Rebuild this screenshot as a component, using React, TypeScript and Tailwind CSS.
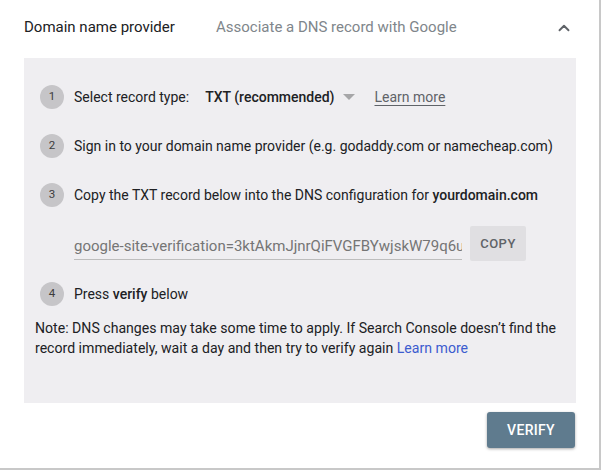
import { ChevronUp } from 'lucide-react'

// ─── Step badge ──────────────────────────────────────────────

function Step({ n, children }: { n: number; children: React.ReactNode }) {
    return (
        <div className="flex items-center h-[26px]">
            <div className="w-[24px] h-[24px] rounded-full bg-[#c6c5c8] text-[#3c3c3c] text-[11.5px] flex items-center justify-center ml-[16px] mr-[10px]">
                {n}
            </div>
            <div className="text-[14px] text-[#202124]">{children}</div>
        </div>
    )
}

export default function App() {
    return (
        <div className="w-[601px] h-[470px] bg-white border-r-[2px] border-b-[2px] border-[#c8c8c8] font-['Roboto',sans-serif]">
            {/* header */}
            <div className="flex items-center h-[58px] pl-[24px] pr-[26px] pb-[3px]">
                <div className="w-[192px] text-[15px] text-[#202124]">Domain name provider</div>
                <div className="flex-1 text-[15px] text-[#80868b]">Associate a DNS record with Google</div>
                <ChevronUp size={18} strokeWidth={2.5} className="text-[#5f6368]" />
            </div>

            {/* body */}
            <div className="mx-[24px] w-[552px] h-[345px] bg-[#efeef1] pt-[26px]">
                <Step n={1}>
                    <span className="inline-flex items-center">
                        Select record type:
                        <span className="ml-[16px] font-medium">TXT (recommended)</span>
                        <span className="ml-[8px] w-0 h-0 border-l-[6px] border-r-[6px] border-t-[6px] border-l-transparent border-r-transparent border-t-[#a6a6a8]" />
                        <span className="ml-[20px] text-[#5f6368] underline underline-offset-[3px]">Learn more</span>
                    </span>
                </Step>
                <div className="h-[23px]" />
                <Step n={2}>Sign in to your domain name provider (e.g. godaddy.com or namecheap.com)</Step>
                <div className="h-[23px]" />
                <Step n={3}>
                    Copy the TXT record below into the DNS configuration for <span className="font-medium">yourdomain.com</span>
                </Step>

                <div className="flex items-center ml-[50px] mt-[18px]">
                    <div className="w-[388px] border-b border-[#bdbdbd] pb-[1px] pt-[8px] text-[15px] text-[#757575] overflow-hidden whitespace-nowrap">
                        google-site-verification=3ktAkmJjnrQiFVGFBYwjskW79q6u
                    </div>
                    <button className="ml-[8px] w-[56px] h-[35px] bg-[#e0dfe2] text-[#5f6368] text-[13px] font-medium tracking-[0.5px] rounded-[2px]">
                        COPY
                    </button>
                </div>

                <div className="h-[20px]" />
                <Step n={4}>
                    Press <span className="font-medium">verify</span> below
                </Step>

                <p className="mx-[11px] mt-[11px] text-[14.1px] leading-[20px] text-[#202124]">
                    Note: DNS changes may take some time to apply. If Search Console doesn’t find the record immediately, wait a day and then try to verify again{' '}
                    <span className="text-[#3c5ccf]">Learn more</span>
                </p>
            </div>

            {/* footer */}
            <div className="flex justify-end pr-[24px] pt-[9px]">
                <button className="w-[88px] h-[36px] bg-[#5f7b8e] text-white text-[14px] font-medium tracking-[0.3px] rounded-[3px] shadow-[0_1px_3px_rgba(0,0,0,0.35)]">
                    VERIFY
                </button>
            </div>
        </div>
    )
}
